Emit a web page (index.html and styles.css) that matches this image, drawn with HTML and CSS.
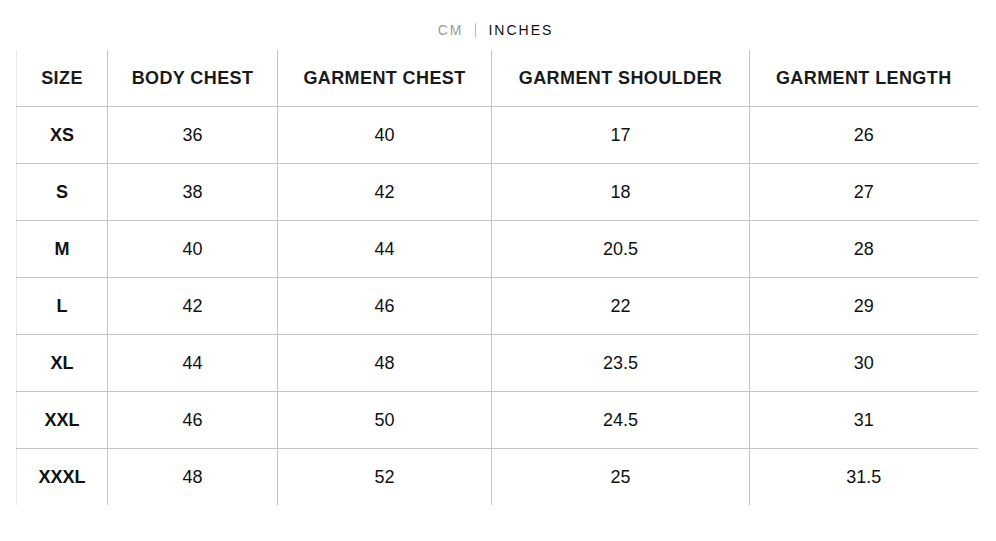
FILE: index.html
```html
<!DOCTYPE html>
<html>
<head>
<meta charset="utf-8">
<link rel="stylesheet" href="styles.css">
</head>
<body>
<div class="page">
  <div class="units">
    <span class="unit unit-off">CM</span>
    <span class="sep"></span>
    <span class="unit unit-on">INCHES</span>
  </div>
  <table class="chart">
    <colgroup>
      <col class="c1"><col class="c2"><col class="c3"><col class="c4"><col class="c5">
    </colgroup>
    <thead>
      <tr><th>SIZE</th><th>BODY CHEST</th><th>GARMENT CHEST</th><th>GARMENT SHOULDER</th><th>GARMENT LENGTH</th></tr>
    </thead>
    <tbody>
      <tr><th>XS</th><td>36</td><td>40</td><td>17</td><td>26</td></tr>
      <tr><th>S</th><td>38</td><td>42</td><td>18</td><td>27</td></tr>
      <tr><th>M</th><td>40</td><td>44</td><td>20.5</td><td>28</td></tr>
      <tr><th>L</th><td>42</td><td>46</td><td>22</td><td>29</td></tr>
      <tr><th>XL</th><td>44</td><td>48</td><td>23.5</td><td>30</td></tr>
      <tr><th>XXL</th><td>46</td><td>50</td><td>24.5</td><td>31</td></tr>
      <tr><th>XXXL</th><td>48</td><td>52</td><td>25</td><td>31.5</td></tr>
    </tbody>
  </table>
</div>
</body>
</html>
```

FILE: styles.css
```css
html, body {
  margin: 0;
  padding: 0;
  background: #fff;
}
body {
  font-family: "Liberation Sans", Arial, sans-serif;
  color: #111;
}
.page {
  padding: 20px 19px 0 16px;
}
.units {
  display: flex;
  justify-content: center;
  align-items: center;
  gap: 12px;
  height: 20px;
  margin-bottom: 10px;
  padding-right: 2px;
  font-size: 14px;
  letter-spacing: 2px;
}
.unit-off { color: #9a9a9a; }
.unit-on { color: #111; }
.sep {
  width: 1px;
  height: 15px;
  background: #bdbdbd;
}
.chart {
  border-collapse: collapse;
  width: 961px;
  table-layout: fixed;
}
.c1 { width: 91px; }
.c2 { width: 170px; }
.c3 { width: 214px; }
.c4 { width: 258px; }
.c5 { width: 228px; }
.chart th, .chart td {
  height: 56px;
  padding: 0;
  text-align: center;
  vertical-align: middle;
  font-size: 18px;
  border-left: 1px solid #c4c4c4;
  border-bottom: 1px solid #c4c4c4;
}
.chart th {
  font-weight: 700;
  font-size: 18px;
}
.chart thead th {
  letter-spacing: 0.4px;
  color: #1a1a1a;
}
.chart tr > :first-child {
  border-left: 1px solid #e8e8e8;
}
.chart tbody tr:last-child > * {
  border-bottom: none;
}
```
